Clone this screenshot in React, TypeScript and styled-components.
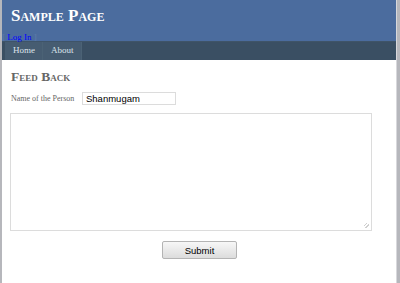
import React from "react";
import styled, { createGlobalStyle } from "styled-components";

const GlobalStyle = createGlobalStyle`
  html, body {
    margin: 0;
    padding: 0;
    background: #b6b7bc;
  }
  body {
    font-family: "Liberation Serif", "Times New Roman", serif;
    font-size: 9px;
  }
`;

const Page = styled.div`
  margin: 0 3px 0 2px;
  background: #fff;
  height: 283px;
  border-right: 1px solid #d8d8dc;
`;

const Header = styled.div`
  background: #4b6c9e;
  height: 41px;
`;

const Title = styled.h1`
  margin: 0;
  padding: 5px 0 0 9px;
  color: #fff;
  font-size: 17px;
  font-weight: bold;
  font-variant: small-caps;
  line-height: 22px;
`;

const LoginDisplay = styled.div`
  padding: 5px 0 0 0;
  font-size: 9px;
  line-height: 10px;
  color: #5f7cab;

  a {
    color: #0000ff;
    text-decoration: none;
  }
`;

const NavBar = styled.div`
  background: #3a4f63;
  height: 18px;
  padding-left: 3px;
  display: flex;
  border-top: 1px solid #3f5468;
`;

const MenuItem = styled.a`
  display: block;
  background: #465c71;
  color: #dde4ec;
  font-size: 9px;
  line-height: 17px;
  padding: 0 7px 0 8px;
  border-right: 1px solid #4b6275;
  text-decoration: none;
`;

const Main = styled.div`
  padding: 9px 9px 0 9px;
`;

const Heading = styled.h2`
  margin: 0;
  color: #666666;
  font-size: 13.5px;
  font-weight: bold;
  font-variant: small-caps;
  line-height: 16px;
`;

const Row = styled.div`
  display: flex;
  align-items: center;
  margin-top: 7px;
`;

const Label = styled.span`
  color: #666666;
  font-size: 8px;
  width: 71px;
`;

const TextBox = styled.input`
  box-sizing: border-box;
  width: 94px;
  height: 13px;
  border: 1px solid #dcdcdc;
  padding: 0 3px;
  font-family: "Liberation Sans", Arial, sans-serif;
  font-size: 9.5px;
  color: #000;
  outline: none;
`;

// small faint resize grip drawn in the corner
const TextArea = styled.textarea`
  display: block;
  box-sizing: border-box;
  margin: 8px 0 0 -1px;
  width: 362px;
  height: 118px;
  border: 1px solid #dcdcdc;
  resize: none;
  outline: none;
  background-color: #fff;
  background-image: repeating-linear-gradient(
    135deg,
    transparent 0 1.5px,
    #cfcfcf 1.5px 2.5px
  );
  background-size: 5px 5px;
  background-position: right 2px bottom 2px;
  background-repeat: no-repeat;
`;

const Actions = styled.div`
  display: flex;
  justify-content: center;
  padding: 10px 0 0 1px;
`;

const Button = styled.button`
  width: 75px;
  height: 18px;
  border: 1px solid #b4b4b4;
  border-radius: 2px;
  background: linear-gradient(#f7f7f7, #dcdcdc);
  font-family: "Liberation Sans", Arial, sans-serif;
  font-size: 9.5px;
  color: #000;
  padding: 0;
`;

export default function App() {
  return (
    <>
      <GlobalStyle />
      <Page>
        <Header>
          <Title>Sample Page</Title>
          <LoginDisplay>
            [ <a href="#">Log In</a> ]
          </LoginDisplay>
        </Header>
        <NavBar>
          <MenuItem href="#">Home</MenuItem>
          <MenuItem href="#">About</MenuItem>
        </NavBar>
        <Main>
          <Heading>Feed Back</Heading>
          <Row>
            <Label>Name of the Person</Label>
            <TextBox defaultValue="Shanmugam" />
          </Row>
          <TextArea />
          <Actions>
            <Button>Submit</Button>
          </Actions>
        </Main>
      </Page>
    </>
  );
}
